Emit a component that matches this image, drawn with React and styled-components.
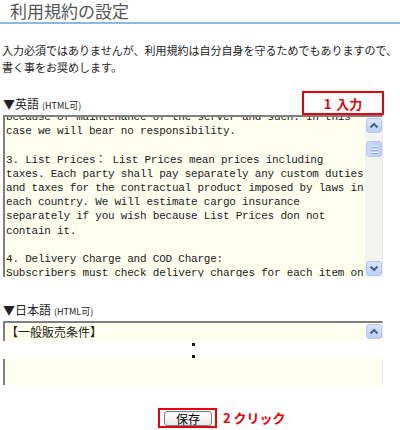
import React from 'react'
import styled, { createGlobalStyle } from 'styled-components'

const GlobalStyle = createGlobalStyle`
body{
  margin:0;
  background:#fff;
  font-family:"Noto Sans CJK JP", sans-serif;
  color:#222;
}
`;

const Page = styled.div`
width:400px;
height:430px;
overflow:hidden;
`;
const Title = styled.h1`
margin:0;
padding:0 0 0 10px;
font-size:17px;
font-weight:400;
line-height:22px;
color:#555;
border-bottom:2px solid #8db7e6;
`;
const Intro = styled.p`
margin:18px 0 0 2px;
font-size:11px;
line-height:17px;
color:#222;
white-space:nowrap;
`;
const Section = styled.div`
margin:${p => p.$top}px 0 0 3px;
width:380px;
`;
const LabelRow = styled.div`
display:flex;
justify-content:space-between;
align-items:center;
height:${p => p.$h}px;
`;
const Label = styled.div`
font-size:12px;
color:#222;
display:flex;
align-items:baseline;
gap:3px;
small{font-size:9px;}
`;
const Note = styled.div`
width:78px;
height:20px;
margin-right:-1px;
border:2px solid #e8000b;
color:#e8000b;
font-weight:700;
font-size:13px;
display:flex;
align-items:center;
justify-content:center;
gap:5px;
`;
const Editor = styled.div`
display:flex;
box-sizing:border-box;
height:${p => p.$h}px;
margin-top:${p => p.$mt || 0}px;
background:#fffff0;
border-top:${p => (p.$open ? 'none' : '2px solid #7f7f7f')};
border-left:2px solid #7f7f7f;
border-right:1px solid #e8e8e2;
`;
const Viewport = styled.div`
flex:1;
overflow:hidden;
padding-left:1px;
font-family:"Liberation Mono", "Noto Sans CJK JP", monospace;
font-size:11px;
letter-spacing:-0.22px;
line-height:14.2px;
color:#1a1a1a;
white-space:pre;
`;
const Scrolled = styled.div`
margin-top:-7px;
`;
const JpText = styled.div`
flex:1;
overflow:hidden;
padding:1px 0 0 1px;
font-size:12px;
line-height:16px;
color:#222;
`;
const Scrollbar = styled.div`
width:17px;
display:flex;
flex-direction:column;
padding:1px 0 1px 1px;
box-sizing:border-box;
background:${p => (p.$bare ? 'transparent' : '#f3f3ef')};
`;
const ArrowBtn = styled.div`
height:15px;
display:flex;
align-items:center;
justify-content:center;
box-sizing:border-box;
border:1px solid #b4c6f0;
border-radius:3px;
background:linear-gradient(#dbe6fe, #bccffa);
`;
const Thumb = styled.div`
height:${p => p.$h}px;
margin-top:${p => p.$mt}px;
display:flex;
flex-direction:column;
align-items:center;
justify-content:center;
gap:2px;
box-sizing:border-box;
border:1px solid #b4c6f0;
border-radius:3px;
background:linear-gradient(90deg, #cbdafc, #bccffa);
span{
  width:7px;
  height:1px;
  background:#eef3ff;
  box-shadow:0 1px 0 #8fa8e0;
}
`;
const Spacer = styled.div`
flex:1;
`;
const Dots = styled.div`
height:18px;
display:flex;
flex-direction:column;
align-items:center;
justify-content:center;
gap:9px;
span{
  width:3px;
  height:3px;
  background:#111;
}
`;
const ButtonRow = styled.div`
margin-top:23px;
width:380px;
padding-right:5px;
box-sizing:border-box;
display:flex;
justify-content:center;
`;
const Boxed = styled.div`
position:relative;
display:flex;
align-items:flex-start;
padding:1px 3px 0 4px;
height:20px;
box-sizing:border-box;
border:2px solid #e8000b;
`;
const SaveButton = styled.button`
width:48px;
height:15px;
padding:0;
display:flex;
align-items:center;
justify-content:center;
font-family:"Noto Sans CJK JP", sans-serif;
font-size:12px;
line-height:13px;
color:#000;
border:1px solid #6f7f96;
border-radius:3px;
background:linear-gradient(#ffffff, #e9e8e2);
`;
const Hint = styled.span`
position:absolute;
left:calc(100% + 8px);
top:-2px;
white-space:nowrap;
font-size:13px;
font-weight:700;
line-height:20px;
color:#e8000b;
`;

const Chevron = ({ down }) => (
  <svg width="10" height="7" viewBox="0 0 10 7">
    <path
      d={down ? 'M1.5 1.5 L5 5 L8.5 1.5' : 'M1.5 5.5 L5 2 L8.5 5.5'}
      fill="none"
      stroke="#4a5f88"
      strokeWidth="2"
    />
  </svg>
);

const englishLines = [
  'because of maintenance of the server and such. In this',
  'case we will bear no responsibility.',
  '',
  '3. List Prices： List Prices mean prices including',
  'taxes. Each party shall pay separately any custom duties',
  'and taxes for the contractual product imposed by laws in',
  'each country. We will estimate cargo insurance',
  'separately if you wish because List Prices don not',
  'contain it.',
  '',
  '4. Delivery Charge and COD Charge:',
  'Subscribers must check delivery charges for each item on',
];

const App = () => {
  return (
    <Page>
      <GlobalStyle />
      <Title>利用規約の設定</Title>
      <Intro>
        入力必須ではありませんが、利用規約は自分自身を守るためでもありますので、
        <br />
        書く事をお奨めします。
      </Intro>

      <Section $top={15}>
        <LabelRow $h={24}>
          <Label>▼英語<small>(HTML可)</small></Label>
          <Note><span>1</span><span>入力</span></Note>
        </LabelRow>
        <Editor $h={162}>
          <Viewport>
            <Scrolled>{englishLines.join('\n')}</Scrolled>
          </Viewport>
          <Scrollbar>
            <ArrowBtn><Chevron /></ArrowBtn>
            <Thumb $h={16} $mt={8}><span /><span /><span /></Thumb>
            <Spacer />
            <ArrowBtn><Chevron down /></ArrowBtn>
          </Scrollbar>
        </Editor>
      </Section>

      <Section $top={24}>
        <LabelRow $h={16}>
          <Label>▼日本語<small>(HTML可)</small></Label>
        </LabelRow>
        <Editor $h={20} $mt={4}>
          <JpText>【一般販売条件】</JpText>
          <Scrollbar $bare>
            <ArrowBtn><Chevron /></ArrowBtn>
          </Scrollbar>
        </Editor>
        <Dots><span /><span /></Dots>
        <Editor $h={26} $open />
      </Section>

      <ButtonRow>
        <Boxed>
          <SaveButton>保存</SaveButton>
          <Hint>2 クリック</Hint>
        </Boxed>
      </ButtonRow>
    </Page>
  )
}

export default App
